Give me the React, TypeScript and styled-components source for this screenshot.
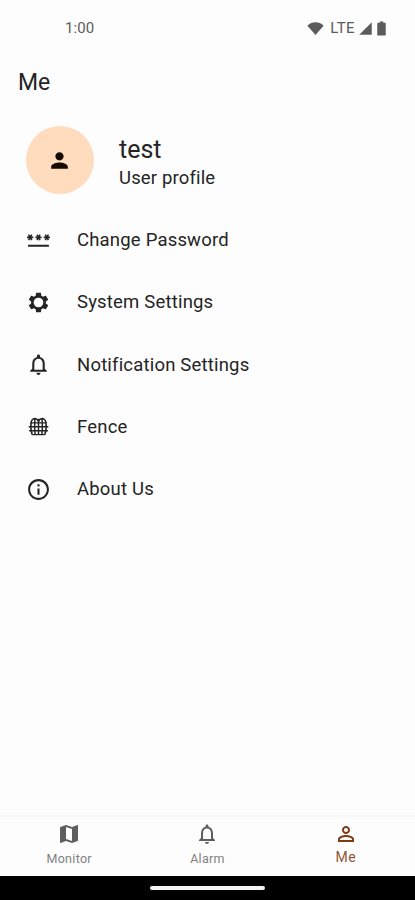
import React from "react";
import styled, { createGlobalStyle } from "styled-components";

const GlobalStyle = createGlobalStyle`
  * { box-sizing: border-box; }
  html, body { margin: 0; padding: 0; background: #fdfdfd; }
  body { font-family: Roboto, sans-serif; }
`;

const Screen = styled.div`
  width: 415px;
  height: 900px;
  display: flex;
  flex-direction: column;
  background: #fdfdfd;
  color: #242424;
  overflow: hidden;
`;

const StatusBar = styled.header`
  height: 56px;
  flex: none;
  display: flex;
  align-items: center;
  justify-content: space-between;
  padding: 0 25px 0 65px;
  font-size: 15px;
  color: #5c5c5c;
`;

const Clock = styled.span`
  letter-spacing: 0.1px;
`;

const StatusIcons = styled.div`
  display: flex;
  align-items: center;
`;

const Network = styled.span`
  margin: 0 3px 0 6px;
  font-size: 15px;
  letter-spacing: 0.4px;
`;

const Title = styled.h1`
  margin: 0;
  height: 52px;
  flex: none;
  padding: 1px 0 0 18px;
  line-height: 52px;
  font-size: 23px;
  font-weight: 400;
`;

const Profile = styled.section`
  height: 104px;
  flex: none;
  display: flex;
  align-items: center;
  padding-left: 26px;
  gap: 25px;
`;

const Avatar = styled.div`
  width: 68px;
  height: 68px;
  border-radius: 50%;
  background: #ffdcbe;
  color: #160b03;
  display: flex;
  align-items: center;
  justify-content: center;
  padding-right: 1px;
`;

const ProfileText = styled.div`
  display: flex;
  flex-direction: column;
  padding-top: 6px;
`;

const UserName = styled.span`
  font-size: 25px;
  line-height: 30px;
`;

const Subtitle = styled.span`
  font-size: 18.5px;
  line-height: 26px;
  letter-spacing: 0.15px;
`;

const Menu = styled.nav`
  flex: 1;
  display: flex;
  flex-direction: column;
`;

const MenuItem = styled.a`
  height: 62.35px;
  display: flex;
  align-items: center;
  padding: 0 0 7px 26px;
`;

const MenuLabel = styled.span`
  margin-left: 26px;
  padding-top: 0.6px;
  font-size: 18.5px;
  line-height: 26px;
  letter-spacing: 0.19px;
`;

const TabBar = styled.nav`
  height: 61px;
  flex: none;
  display: grid;
  grid-template-columns: repeat(3, 1fr);
  border-top: 2px solid #f8f8f8;
`;

const Tab = styled.a<{ $active?: boolean }>`
  display: flex;
  flex-direction: column;
  align-items: center;
  padding-top: 5px;
  color: ${(p) => (p.$active ? "#7d3a14" : "#5e5e5e")};
`;

const TabLabel = styled.span<{ $active?: boolean }>`
  margin-top: ${(p) => (p.$active ? 2 : 4)}px;
  font-size: ${(p) => (p.$active ? 14 : 12.5)}px;
  line-height: 18px;
  letter-spacing: ${(p) => (p.$active ? 0.5 : 0.3)}px;
  color: ${(p) => (p.$active ? "#915535" : "#818181")};
`;

const GestureBar = styled.footer`
  height: 24px;
  flex: none;
  display: flex;
  justify-content: center;
  align-items: center;
  background: #000;
`;

const GestureHandle = styled.div`
  width: 115px;
  height: 4px;
  border-radius: 2px;
  background: #f4f4f4;
`;

const PATHS = {
  person:
    "M12 12c2.21 0 4-1.79 4-4s-1.79-4-4-4-4 1.79-4 4 1.79 4 4 4zm0 2c-2.67 0-8 1.34-8 4v2h16v-2c0-2.66-5.33-4-8-4z",
  personOutline:
    "M12 5.9a2.1 2.1 0 1 1 0 4.2 2.1 2.1 0 0 1 0-4.2m0 9c2.97 0 6.1 1.46 6.1 2.1v1.1H5.9V17c0-.64 3.13-2.1 6.1-2.1M12 4C9.79 4 8 5.79 8 8s1.79 4 4 4 4-1.79 4-4-1.79-4-4-4zm0 9c-2.67 0-8 1.34-8 4v3h16v-3c0-2.66-5.33-4-8-4z",
  password:
    "M2 17h20v2H2v-2zm1.15-4.05L4 11.47l.85 1.48 1.3-.75-.85-1.48H7v-1.5H5.3l.85-1.47L4.85 7 4 8.47 3.15 7l-1.3.75.85 1.47H1v1.5h1.7l-.85 1.48 1.3.75zm6.7-.75 1.3.75.85-1.48.85 1.48 1.3-.75-.85-1.48H15v-1.5h-1.7l.85-1.47-1.3-.75L12 8.47 11.15 7l-1.3.75.85 1.47H9v1.5h1.7l-.85 1.48zM23 9.22h-1.7l.85-1.47-1.3-.75L20 8.47 19.15 7l-1.3.75.85 1.47H17v1.5h1.7l-.85 1.48 1.3.75.85-1.48.85 1.48 1.3-.75-.85-1.48H23v-1.5z",
  settings:
    "M19.43 12.98c.04-.32.07-.64.07-.98s-.03-.66-.07-.98l2.11-1.65c.19-.15.24-.42.12-.64l-2-3.46c-.12-.22-.39-.3-.61-.22l-2.49 1c-.52-.4-1.08-.73-1.69-.98l-.38-2.65C14.46 2.18 14.25 2 14 2h-4c-.25 0-.46.18-.49.42l-.38 2.65c-.61.25-1.17.59-1.69.98l-2.49-1c-.23-.09-.49 0-.61.22l-2 3.46c-.13.22-.07.49.12.64l2.11 1.65c-.04.32-.07.65-.07.98s.03.66.07.98l-2.11 1.65c-.19.15-.24.42-.12.64l2 3.46c.12.22.39.3.61.22l2.49-1c.52.4 1.08.73 1.69.98l.38 2.65c.03.24.24.42.49.42h4c.25 0 .46-.18.49-.42l.38-2.65c.61-.25 1.17-.59 1.69-.98l2.49 1c.23.09.49 0 .61-.22l2-3.46c.12-.22.07-.49-.12-.64l-2.11-1.65zM12 16.9a4.9 4.9 0 1 1 0-9.8 4.9 4.9 0 0 1 0 9.8z",
  bell:
    "M12 22c1.1 0 2-.9 2-2h-4c0 1.1.9 2 2 2zm6-6v-5c0-3.07-1.63-5.64-4.5-6.32V4c0-.83-.67-1.5-1.5-1.5s-1.5.67-1.5 1.5v.68C7.64 5.36 6 7.92 6 11v5l-2 2v1h16v-1l-2-2zm-2 1H8v-6c0-2.48 1.51-4.5 4-4.5s4 2.02 4 4.5v6z",
  info:
    "M11 7h2v2h-2zm0 4h2v6h-2zm1-9C6.48 2 2 6.48 2 12s4.48 10 10 10 10-4.48 10-10S17.52 2 12 2zm0 18c-4.41 0-8-3.59-8-8s3.59-8 8-8 8 3.59 8 8-3.59 8-8 8z",
  map:
    "M20.5 3l-.16.03L15 5.1 9 3 3.36 4.9c-.21.07-.36.25-.36.48V20.5c0 .28.22.5.5.5l.16-.03L9 18.9l6 2.1 5.64-1.9c.21-.07.36-.25.36-.48V3.5c0-.28-.22-.5-.5-.5zM15 19l-6-2.11V5l6 2.11V19z",
  wifi: "M12 21 .5 8C4 4.2 8 3 12 3s8 1.2 11.5 5z",
  signal: "M2 22h20V2z",
  battery:
    "M16.67 4H14.5V2h-5v2H7.33C6.6 4 6 4.6 6 5.33v15.33C6 21.4 6.6 22 7.33 22h9.33c.74 0 1.34-.6 1.34-1.33V5.33C18 4.6 17.4 4 16.67 4z",
};

function Icon({ name, size }: { name: keyof typeof PATHS; size: number }) {
  return (
    <svg width={size} height={size} viewBox="0 0 24 24" fill="currentColor" fillRule="evenodd">
      <path d={PATHS[name]} />
    </svg>
  );
}

/* Gear drawn slightly inside its 25px box, so it lines up with the other icons. */
function GearIcon({ size }: { size: number }) {
  return (
    <svg width={size} height={size} viewBox="-0.7 -0.7 25.4 25.4" fill="currentColor" fillRule="evenodd">
      <path d={PATHS.settings} />
    </svg>
  );
}

function FenceIcon({ size }: { size: number }) {
  return (
    <svg width={size} height={size} viewBox="0 0 24 24" fill="none" stroke="currentColor" strokeWidth="1.4">
      <path d="M4 8.5h16M2.6 12.2h18.8M3 16h18M6 19.8h12" />
      <path d="M6 20Q3.8 14 5 7.5Q6 4.3 8.6 4.2Q11.2 4.6 12 7.5Q12.8 4.6 15.4 4.2Q18 4.3 19 7.5Q20.2 14 18 20M12 4.5V20M8.6 4.2Q7.8 12 8.8 20M15.4 4.2Q16.2 12 15.2 20" />
    </svg>
  );
}

const items = [
  { label: "Change Password", icon: <Icon name="password" size={25} /> },
  { label: "System Settings", icon: <GearIcon size={25} /> },
  { label: "Notification Settings", icon: <Icon name="bell" size={25} /> },
  { label: "Fence", icon: <FenceIcon size={25} /> },
  { label: "About Us", icon: <Icon name="info" size={25} /> },
];

export default function App() {
  return (
    <Screen>
      <GlobalStyle />
      <StatusBar>
        <Clock>1:00</Clock>
        <StatusIcons>
          <Icon name="wifi" size={17} />
          <Network>LTE</Network>
          <Icon name="signal" size={15} />
          <Icon name="battery" size={17} />
        </StatusIcons>
      </StatusBar>
      <Title>Me</Title>
      <Profile>
        <Avatar>
          <Icon name="person" size={25} />
        </Avatar>
        <ProfileText>
          <UserName>test</UserName>
          <Subtitle>User profile</Subtitle>
        </ProfileText>
      </Profile>
      <Menu>
        {items.map((item) => (
          <MenuItem key={item.label}>
            {item.icon}
            <MenuLabel>{item.label}</MenuLabel>
          </MenuItem>
        ))}
      </Menu>
      <TabBar>
        <Tab>
          <Icon name="map" size={24} />
          <TabLabel>Monitor</TabLabel>
        </Tab>
        <Tab>
          <Icon name="bell" size={24} />
          <TabLabel>Alarm</TabLabel>
        </Tab>
        <Tab $active>
          <Icon name="personOutline" size={24} />
          <TabLabel $active>Me</TabLabel>
        </Tab>
      </TabBar>
      <GestureBar>
        <GestureHandle />
      </GestureBar>
    </Screen>
  );
}
